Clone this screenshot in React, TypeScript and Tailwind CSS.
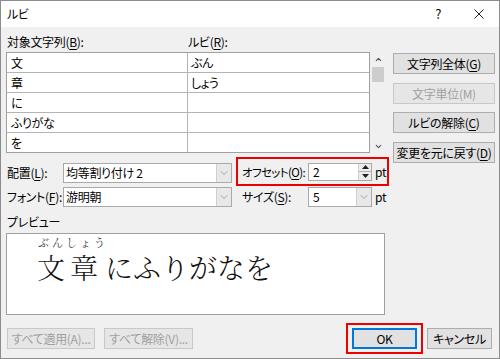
import { ChevronDown, ChevronUp } from "lucide-react";
import { ReactNode } from "react";

const U = ({ c }: { c: string }) => (
  <span className="underline underline-offset-[2px]">{c}</span>
);

const Btn = ({
  children,
  disabled,
  className = "",
}: {
  children: ReactNode;
  disabled?: boolean;
  className?: string;
}) => (
  <div
    className={`flex items-center justify-center border whitespace-nowrap ${
      disabled
        ? "bg-[#e6e6e6] border-[#c8c8c8] text-[#a0a0a0]"
        : "bg-[#e1e1e1] border-[#adadad] text-black"
    } ${className}`}
  >
    {children}
  </div>
);

const Combo = ({ value, className = "" }: { value: string; className?: string }) => (
  <div className={`flex bg-white border border-[#a9a9a9] ${className}`}>
    <div className="flex-1 pl-[2px] flex items-center">{value}</div>
    <div className="w-[15px] bg-[#e8e8e8] border-l border-[#d0d0d0] flex items-center justify-center">
      <ChevronDown size={12} strokeWidth={1.2} color="#707070" />
    </div>
  </div>
);

const rows = [
  ["文", "ぶん"],
  ["章", "しょう"],
  ["に", ""],
  ["ふりがな", ""],
  ["を", ""],
];

export default function App() {
  return (
    <div className="w-[500px] h-[359px] border border-[#8c8c8c] bg-[#f0f0f0] flex flex-col text-[12px] leading-[14px] tracking-[-0.3px] whitespace-nowrap text-black [font-feature-settings:'palt'] font-['Noto_Sans_CJK_JP',sans-serif]">
      {/* title bar */}
      <div className="h-[26px] bg-white flex items-center pl-[6px] pr-[15px]">
        <span>ルビ</span>
        <span className="ml-auto text-[13px]">?</span>
        <svg width="10" height="10" viewBox="0 0 10 10" className="ml-[33px]">
          <path d="M0.5 0.5 L9.5 9.5 M9.5 0.5 L0.5 9.5" stroke="#222" strokeWidth="1" />
        </svg>
      </div>

      <div className="flex-1 flex flex-col pl-[5px]">
        <div className="flex">
          {/* left column */}
          <div className="w-[383px] flex flex-col">
            <div className="flex pt-[8px]">
              <div className="w-[182px] pl-[1px]">
                対象文字列(<U c="B" />):
              </div>
              <div>
                ルビ(<U c="R" />):
              </div>
            </div>

            <div className="flex mt-[3px]">
              <div className="w-[364px] h-[101px] border border-[#a0a0a0] bg-[#b4b4b4] grid grid-cols-[180px_1fr] gap-[1px]">
                {rows.map(([base, ruby], i) => (
                  <div key={i} className="contents">
                    <div className="bg-white h-[19px] pl-[4px] flex items-center">{base}</div>
                    <div className="bg-white h-[19px] pl-[3px] flex items-center">{ruby}</div>
                  </div>
                ))}
              </div>
              <div className="ml-[1px] w-[14px] h-[101px] flex flex-col items-center">
                <div className="h-[14px] flex items-center justify-center">
                  <ChevronUp size={9} strokeWidth={3} color="#555" />
                </div>
                <div className="mt-[1px] w-[12px] h-[15px] bg-[#cdcdcd]" />
                <div className="mt-auto h-[14px] flex items-center justify-center">
                  <ChevronDown size={9} strokeWidth={3} color="#555" />
                </div>
              </div>
            </div>

            {/* 配置 / オフセット */}
            <div className="flex mt-[4px] h-[29px]">
              <div className="w-[57px] pl-[1px] pt-[9px]">
                配置(<U c="L" />):
              </div>
              <Combo value="均等割り付け 2" className="w-[169px] h-[20px] mt-[6px]" />
              <div className="ml-[4px] w-[153px] h-[29px] border-2 border-[#ee0000] flex items-center pl-[4px]">
                <div className="w-[66px] text-[11.5px] tracking-[-0.6px]">
                  オフセット(<U c="O" />):
                </div>
                <div className="w-[64px] h-[18px] bg-white border border-[#a9a9a9] flex">
                  <div className="flex-1 pl-[4px] flex items-center">2</div>
                  <div className="w-[13px] flex flex-col border-l border-[#d0d0d0]">
                    <div className="flex-1 bg-[#ececec] border-b border-[#b0b0b0] flex items-center justify-center">
                      <svg width="7" height="4" viewBox="0 0 7 4">
                        <path d="M3.5 0 L7 4 L0 4 Z" fill="#222" />
                      </svg>
                    </div>
                    <div className="flex-1 bg-[#ececec] flex items-center justify-center">
                      <svg width="7" height="4" viewBox="0 0 7 4">
                        <path d="M0 0 L7 0 L3.5 4 Z" fill="#222" />
                      </svg>
                    </div>
                  </div>
                </div>
                <span className="ml-[3px]">pt</span>
              </div>
            </div>

            {/* フォント / サイズ */}
            <div className="flex mt-[1px] h-[20px] items-center">
              <div className="w-[57px] pl-[1px]">
                フォント(<U c="F" />):
              </div>
              <Combo value="游明朝" className="w-[169px] h-[20px]" />
              <div className="ml-[10px] w-[66px]">
                サイズ(<U c="S" />):
              </div>
              <Combo value="5" className="w-[64px] h-[20px] pl-[2px]" />
              <span className="ml-[3px]">pt</span>
            </div>

            <div className="mt-[8px] pl-[1px]">プレビュー</div>

            <div className="mt-[4px] w-[379px] h-[82px] bg-white border border-[#a0a0a0] pl-[30px] pt-[3px] tracking-normal [font-feature-settings:normal]">
              <div className="flex text-[#111] font-['Noto_Serif_CJK_JP','Noto_Sans_CJK_JP',serif] font-light">
                <div className="w-[68px] flex flex-col">
                  <div className="flex justify-between text-[11px] leading-[11px] pl-[1px]">
                    <span>ぶ</span>
                    <span>ん</span>
                    <span>し</span>
                    <span>ょ</span>
                    <span>う</span>
                  </div>
                  <div className="flex text-[28px] leading-[30px] mt-[4px]">
                    <span>文</span>
                    <span className="ml-[5px]">章</span>
                  </div>
                </div>
                <div className="mt-[15px] text-[28px] leading-[30px]">にふりがなを</div>
              </div>
            </div>
          </div>

          {/* right buttons */}
          <div className="ml-[4px] w-[102px] pt-[26px] flex flex-col">
            <Btn className="h-[21px]">
              文字列全体(<U c="G" />)
            </Btn>
            <Btn disabled className="h-[21px] mt-[9px]">
              文字単位(M)
            </Btn>
            <Btn className="h-[21px] mt-[8px]">
              ルビの解除(<U c="C" />)
            </Btn>
            <Btn className="h-[21px] mt-[9px]">
              変更を元に戻す(<U c="D" />)
            </Btn>
          </div>
        </div>

        {/* bottom buttons */}
        <div className="flex items-center mt-[8px] h-[31px] pr-[7px]">
          <Btn disabled className="ml-[1px] w-[88px] h-[21px]">
            すべて適用(A)...
          </Btn>
          <Btn disabled className="ml-[9px] w-[89px] h-[21px]">
            すべて解除(V)...
          </Btn>
          <div className="ml-auto w-[77px] h-[31px] border-2 border-[#ee0000] flex items-center justify-center">
            <div className="w-[65px] h-[21px] bg-[#e1e1e1] border-2 border-[#0078d7] flex items-center justify-center">
              OK
            </div>
          </div>
          <Btn className="ml-[4px] w-[65px] h-[21px]">キャンセル</Btn>
        </div>
      </div>
    </div>
  );
}
